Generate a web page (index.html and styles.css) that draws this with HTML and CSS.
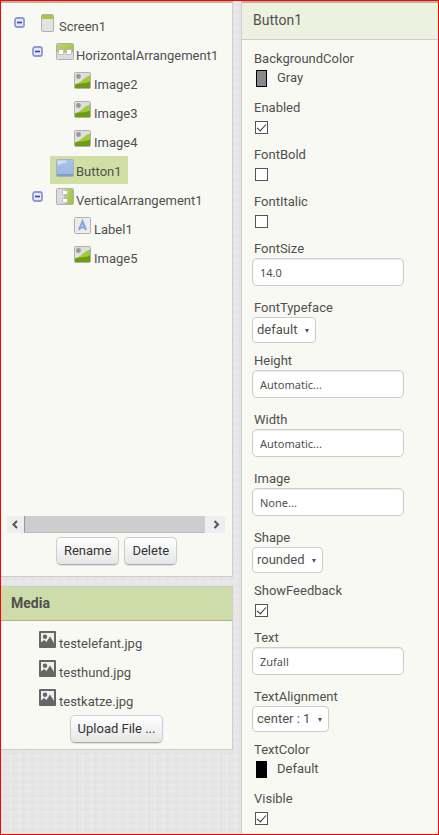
FILE: index.html
```html
<!DOCTYPE html>
<html lang="en">
<head>
<meta charset="utf-8">
<meta name="viewport" content="width=device-width, initial-scale=1">
<title>Designer</title>
<link rel="stylesheet" href="styles.css">
</head>
<body>
<svg class="defs" aria-hidden="true">
  <defs>
    <linearGradient id="green" x1="0" y1="0" x2="1" y2="1"><stop offset="0" stop-color="#b9d96c"/><stop offset="1" stop-color="#9dc234"/></linearGradient>
    <linearGradient id="blue" x1="0" y1="0" x2="0" y2="1"><stop offset="0" stop-color="#a9c3e8"/><stop offset="1" stop-color="#9ab7df"/></linearGradient>
    <linearGradient id="grey" x1="0" y1="0" x2="0" y2="1"><stop offset="0" stop-color="#dcdcdc"/><stop offset="1" stop-color="#e8e8e8"/></linearGradient>
    <symbol id="minus" viewBox="0 0 11 11">
      <rect x="1" y="1" width="9" height="9" rx="2" fill="#e6e9f8" stroke="#8e9bd0" stroke-width="1.800"/>
      <path d="M3 5.500h5" stroke="#3a3fc0" stroke-width="1.600"/>
    </symbol>
    <symbol id="image" viewBox="0 0 18 18">
      <rect x="0.500" y="0.500" width="16" height="16" rx="1" fill="url(#grey)"/>
      <path d="M1 12C7 11.500 9 5.500 16 3.500V16H1z" fill="#a4c93c"/>
      <path d="M1 13C5 10.500 8 12.500 16 9.500V16H1z" fill="#6c9c12"/>
      <circle cx="4.500" cy="4.500" r="2.400" fill="#999"/>
      <rect x="0.500" y="0.500" width="16" height="16" rx="1" fill="none" stroke="#b0b0b0"/>
    </symbol>
    <symbol id="file" viewBox="0 0 18 18">
      <rect x="0" y="0" width="17" height="17" rx="1" fill="#666"/>
      <rect x="2" y="2" width="13" height="10.500" fill="#eef0ea"/>
      <circle cx="6" cy="5.800" r="2.200" fill="#666"/>
      <path d="M2 13V11.500L5 9L7.500 11L11 5.500L15 12V13z" fill="#666"/>
    </symbol>
  </defs>
</svg>
<div class="designer">
  <div class="side">
    <section class="panel">
      <ul class="tree">
        <li class="node level-0"><button class="toggle" aria-label="Collapse Screen1"><svg><use href="#minus"/></svg></button>
          <a class="item" href="#"><svg class="phone" viewBox="0 0 13 18"><rect x="0.500" y="0.500" width="12" height="17" rx="1.500" fill="#e3e3e3"/><path d="M1 1h11v4H1z" fill="#a6c83e"/><rect x="0.500" y="0.500" width="12" height="17" rx="1.500" fill="none" stroke="#b2b2b2"/></svg><span>Screen1</span></a></li>
        <li class="node level-1"><button class="toggle" aria-label="Collapse HorizontalArrangement1"><svg><use href="#minus"/></svg></button>
          <a class="item" href="#"><svg class="icon" viewBox="0 0 18 18"><rect x="0.500" y="0.500" width="17" height="16" rx="1" fill="#dcdcdc"/><path d="M1 1h16v8H1z" fill="url(#green)"/><rect x="2.500" y="6.500" width="5" height="5" rx="1" fill="#fff" stroke="#bbb"/><rect x="10.500" y="6.500" width="5" height="5" rx="1" fill="#fff" stroke="#bbb"/><path d="M8 9h2" stroke="#bbb" stroke-width="2"/><rect x="0.500" y="0.500" width="17" height="16" rx="1" fill="none" stroke="#b0b0b0"/></svg><span>HorizontalArrangement1</span></a></li>
        <li class="node level-2"><a class="item" href="#"><svg class="icon"><use href="#image"/></svg><span>Image2</span></a></li>
        <li class="node level-2"><a class="item" href="#"><svg class="icon"><use href="#image"/></svg><span>Image3</span></a></li>
        <li class="node level-2"><a class="item" href="#"><svg class="icon"><use href="#image"/></svg><span>Image4</span></a></li>
        <li class="node leaf-1"><a class="item selected" href="#" aria-current="true"><svg class="icon" viewBox="0 0 18 18"><rect x="0.500" y="0.500" width="17" height="17" rx="1" fill="url(#blue)"/><path d="M1.500 1.500h9v2q-5 0.500-9 3z" fill="#d3e1f5"/><path d="M1 15h16v2H1z" fill="#7c9ecf"/><rect x="0.500" y="0.500" width="17" height="17" rx="1" fill="none" stroke="#a9b1bb"/></svg><span>Button1</span></a></li>
        <li class="node level-1"><button class="toggle" aria-label="Collapse VerticalArrangement1"><svg><use href="#minus"/></svg></button>
          <a class="item" href="#"><svg class="icon" viewBox="0 0 18 18"><rect x="0.500" y="0.500" width="17" height="16" rx="1" fill="#dcdcdc"/><path d="M9 1h8v15H9z" fill="url(#green)"/><rect x="6.500" y="2.500" width="5" height="4" rx="1" fill="#fff" stroke="#bbb"/><rect x="6.500" y="10.500" width="5" height="4" rx="1" fill="#fff" stroke="#bbb"/><path d="M9 7v3" stroke="#bbb" stroke-width="2"/><rect x="0.500" y="0.500" width="17" height="16" rx="1" fill="none" stroke="#b0b0b0"/></svg><span>VerticalArrangement1</span></a></li>
        <li class="node level-2"><a class="item" href="#"><svg class="icon" viewBox="0 0 18 18"><rect x="0.500" y="0.500" width="16" height="16" rx="1" fill="#ececec" stroke="#b0b0b0"/><path d="M5 13L8.500 4.500L12 13M6.200 10.500h4.600" fill="none" stroke="#86a9dc" stroke-width="2.200"/></svg><span>Label1</span></a></li>
        <li class="node level-2"><a class="item" href="#"><svg class="icon"><use href="#image"/></svg><span>Image5</span></a></li>
      </ul>
      <div class="scrollbar">
        <button class="scroll-step" aria-label="Scroll left"><svg viewBox="0 0 17 17"><path d="M10 5L6.500 8.500L10 12" fill="none" stroke="#555" stroke-width="2"/></svg></button>
        <div class="scroll-thumb"></div>
        <button class="scroll-step end" aria-label="Scroll right"><svg viewBox="0 0 17 17"><path d="M7.500 5L11 8.500L7.500 12" fill="none" stroke="#555" stroke-width="2"/></svg></button>
      </div>
      <div class="actions"><button class="button">Rename</button><button class="button">Delete</button></div>
    </section>
    <section class="panel">
      <h2 class="media-title">Media</h2>
      <ul class="files">
        <li><a class="item" href="#"><svg class="icon"><use href="#file"/></svg><span>testelefant.jpg</span></a></li>
        <li><a class="item" href="#"><svg class="icon"><use href="#file"/></svg><span>testhund.jpg</span></a></li>
        <li><a class="item" href="#"><svg class="icon"><use href="#file"/></svg><span>testkatze.jpg</span></a></li>
      </ul>
      <div class="actions upload"><button class="button">Upload File ...</button></div>
    </section>
  </div>
  <section class="panel properties">
    <h2 class="component-title">Button1</h2>
    <form class="fields">
      <div class="field"><label for="bg">BackgroundColor</label><button class="color" id="bg" type="button"><span class="swatch gray"></span>Gray</button></div>
      <div class="field"><label for="enabled">Enabled</label><input class="check" type="checkbox" id="enabled" checked></div>
      <div class="field"><label for="bold">FontBold</label><input class="check" type="checkbox" id="bold"></div>
      <div class="field"><label for="italic">FontItalic</label><input class="check" type="checkbox" id="italic"></div>
      <div class="field"><label for="size">FontSize</label><input class="text" type="text" id="size" value="14.0"></div>
      <div class="field"><label for="face">FontTypeface</label><div class="select"><select id="face"><option>default</option></select></div></div>
      <div class="field"><label for="height">Height</label><input class="text" type="text" id="height" value="Automatic..."></div>
      <div class="field"><label for="width">Width</label><input class="text" type="text" id="width" value="Automatic..."></div>
      <div class="field"><label for="image-file">Image</label><input class="text" type="text" id="image-file" value="None..."></div>
      <div class="field"><label for="shape">Shape</label><div class="select"><select id="shape"><option>rounded</option></select></div></div>
      <div class="field"><label for="feedback">ShowFeedback</label><input class="check" type="checkbox" id="feedback" checked></div>
      <div class="field"><label for="text">Text</label><input class="text" type="text" id="text" value="Zufall"></div>
      <div class="field"><label for="align">TextAlignment</label><div class="select"><select id="align"><option>center : 1</option></select></div></div>
      <div class="field"><label for="color">TextColor</label><button class="color" id="color" type="button"><span class="swatch black"></span>Default</button></div>
      <div class="field"><label for="visible">Visible</label><input class="check" type="checkbox" id="visible" checked></div>
    </form>
  </section>
</div>
</body>
</html>
```
FILE: styles.css
```css
* { box-sizing: border-box; }

body {
  margin: 0;
  font: 13px/18px Roboto, sans-serif;
  color: #505050;
}

button, input, select { font: inherit; color: inherit; margin: 0; }
ul, h2 { margin: 0; padding: 0; list-style: none; }
svg { display: block; flex: none; }
.defs { position: absolute; width: 0; height: 0; }

.designer {
  display: grid;
  grid-template-columns: minmax(0, 232fr) minmax(0, 197fr);
  column-gap: 8px;
  min-height: 100vh;
  border: 1px solid #f00;
  background-color: #e6e6e6;
  background-image:
    repeating-linear-gradient(0deg, rgba(255, 255, 255, 0.15) 0 1px, transparent 1px 3px, rgba(0, 0, 0, 0.01) 3px 4px, transparent 4px 7px),
    repeating-linear-gradient(90deg, rgba(255, 255, 255, 0.15) 0 1px, transparent 1px 4px, rgba(0, 0, 0, 0.02) 4px 5px, transparent 5px 9px);
}

.side { display: flex; flex-direction: column; gap: 9px; }

.panel {
  background: #f8f9f3;
  border: 1px solid #ccc;
  border-left: 0;
}
.panel:first-child, .properties { border-top: 2px solid #b4b5a4; }

.tree { min-height: 513px; padding-top: 8px; }
.node { display: flex; align-items: flex-start; margin-bottom: 1px; }
.level-0 { padding-left: 13px; }
.level-1 { padding-left: 31px; }
.leaf-1 { padding-left: 49px; }
.level-2 { padding-left: 67px; }

.toggle {
  width: 11px;
  height: 11px;
  margin: 6px 10px 0 0;
  padding: 0;
  border: 0;
  background: none;
}
.level-1 .toggle { margin-right: 7px; }
.toggle svg { width: 11px; height: 11px; }

.item {
  display: flex;
  gap: 2px;
  padding: 3px 6px;
  color: inherit;
  text-decoration: none;
}
.item span { margin-top: 4px; }
.selected { background: #d2dfa4; }
.icon { width: 18px; height: 18px; }
.phone { width: 13px; height: 18px; }
.level-0 .item { gap: 5px; }

.scrollbar { display: flex; height: 17px; margin: 0 7px 0 6px; background: #eee; }
.scroll-step { width: 17px; padding: 0; border: 0; background: #eee; }
.scroll-step svg { width: 17px; height: 17px; }
.scroll-thumb { flex: 1; background: #cdcdcd; border-left: 1px solid #999; border-bottom: 1px solid #bbb; }
.scroll-step.end { width: 20px; }
.scroll-step.end svg { margin-left: 2px; }

.actions { display: flex; justify-content: center; gap: 5px; padding: 4px 0 11px; }
.upload { padding: 0 0 6px; }
.button {
  height: 28px;
  padding: 0 7px;
  border: 1px solid #ccc;
  border-bottom-color: #aaa;
  border-radius: 5px;
  background: linear-gradient(#fff, #e6e6e6);
  box-shadow: 0 1px 1px rgba(0, 0, 0, 0.1);
  color: #333;
}

.media-title {
  padding: 8px 10px;
  font-size: 14px;
  line-height: 17px;
  background: #cddca9;
  border-bottom: 1px solid #a9b292;
}
.files { padding: 7px 0 0 32px; }
.files li { margin-bottom: 1px; }

.properties { border-left: 1px solid #ccc; border-right: 0; border-bottom: 0; }
.component-title {
  padding: 8px 11px 10px;
  font-size: 14px;
  line-height: 18px;
  font-weight: 400;
  background: #ecf1e0;
  border-bottom: 1px solid #ccc;
}
.fields { padding: 10px 10px 0; }
.field { display: flex; flex-direction: column; align-items: flex-start; }
.field:last-child .check { margin-bottom: 8px; }
.field label { padding-left: 2px; }

.color {
  display: flex;
  align-items: center;
  gap: 10px;
  height: 20px;
  margin-bottom: 11px;
  padding: 0 4px;
  border: 0;
  background: none;
}
.swatch { width: 11px; height: 17px; border: 1px solid #000; }
.gray { background: #888; }
.black { background: #000; }

.check {
  appearance: none;
  display: flex;
  justify-content: center;
  width: 13px;
  height: 13px;
  margin: 4px 0 12px 3px;
  border: 1px solid #555;
  background: #fff;
}
.check:checked::after {
  content: "";
  width: 4px;
  height: 8px;
  border: solid #333;
  border-width: 0 1px 1px 0;
  transform: rotate(42deg);
}

.text {
  width: 152px;
  max-width: 100%;
  height: 28px;
  margin-bottom: 13px;
  padding: 0 7px;
  border: 1px solid #ccc;
  border-radius: 5px;
  background: #fff;
  box-shadow: inset 0 1px 1px rgba(0, 0, 0, 0.08);
  font: 11px/16px "Noto Sans", sans-serif;
}

.select { position: relative; margin-bottom: 9px; }
.select select {
  appearance: none;
  display: block;
  height: 26px;
  padding: 0 17px 0 4px;
  border: 1px solid #ccc;
  border-radius: 4px;
  background: #fff;
}
.select::after {
  content: "";
  position: absolute;
  top: 12px;
  right: 7px;
  border: solid transparent;
  border-width: 4px 2px 0;
  border-top-color: #555;
}
```
